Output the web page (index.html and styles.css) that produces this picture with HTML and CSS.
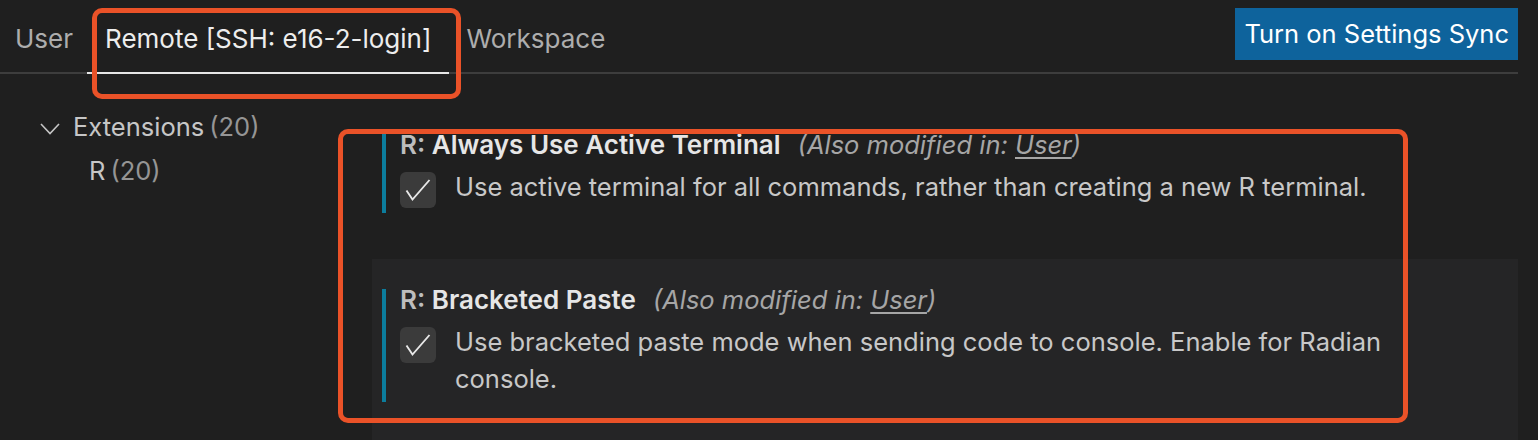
FILE: index.html
```html
<!DOCTYPE html>
<html lang="en">
<head>
<meta charset="utf-8">
<title>Settings</title>
<link rel="stylesheet" href="styles.css">
</head>
<body>
<div class="app">
  <header class="header">
    <nav class="tabs">
      <div class="tab tab-first">User</div>
      <div class="tab active">Remote [SSH: e16-2-login]</div>
      <div class="tab">Workspace</div>
    </nav>
    <button class="sync">Turn on Settings Sync</button>
  </header>
  <div class="content">
    <aside class="toc">
      <div class="toc-row">
        <svg class="chev" width="20" height="12" viewBox="0 0 20 12"><polyline points="1,1 10,10.5 19,1" fill="none" stroke="#c5c5c5" stroke-width="1.6"/></svg>
        <span class="toc-label">Extensions</span><span class="count">(20)</span>
      </div>
      <div class="toc-row sub"><span class="toc-label">R</span><span class="count">(20)</span></div>
    </aside>
    <main class="list">
      <section class="item">
        <div class="item-body">
          <div class="title"><span class="cat">R: </span><span class="label">Always Use Active Terminal</span><span class="also">(Also modified in: <span class="link">User</span>)</span></div>
          <div class="value">
            <span class="checkbox"><svg width="36" height="36" viewBox="0 0 36 36"><polyline points="6.5,18.5 12.5,27.5 29.5,8" fill="none" stroke="#e8e8e8" stroke-width="1.9"/></svg></span>
            <p class="desc">Use active terminal for all commands, rather than creating a new R terminal.</p>
          </div>
        </div>
      </section>
      <section class="item focused">
        <div class="item-body">
          <div class="title"><span class="cat">R: </span><span class="label">Bracketed Paste</span><span class="also">(Also modified in: <span class="link">User</span>)</span></div>
          <div class="value">
            <span class="checkbox"><svg width="36" height="36" viewBox="0 0 36 36"><polyline points="6.5,18.5 12.5,27.5 29.5,8" fill="none" stroke="#e8e8e8" stroke-width="1.9"/></svg></span>
            <p class="desc">Use bracketed paste mode when sending code to console. Enable for Radian console.</p>
          </div>
        </div>
      </section>
    </main>
  </div>
  <div class="annot annot-tab"></div>
  <div class="annot annot-items"></div>
</div>
</body>
</html>
```
FILE: styles.css
```css
html, body {
  margin: 0;
  padding: 0;
  background: #1f1f1f;
  height: 440px;
  overflow: hidden;
}

.app {
  position: relative;
  width: 1518px;
  height: 440px;
  font-family: Inter, "Noto Sans", sans-serif;
  font-size: 26px;
  color: #c8c8c8;
}

.header {
  display: flex;
  justify-content: space-between;
  align-items: flex-start;
  height: 74px;
  box-sizing: border-box;
  border-bottom: 2px solid #3d3d3d;
}

.tabs {
  display: flex;
}

.tab {
  height: 74px;
  box-sizing: border-box;
  margin-bottom: -2px;
  padding: 22.5px 16px 0 17px;
  line-height: 32px;
  color: #adadad;
  border-bottom: 2px solid transparent;
  white-space: nowrap;
}

.tab-first {
  padding-left: 15px;
  padding-right: 14px;
}

.tab.active {
  color: #ededed;
  border-bottom-color: #e6e6e6;
  padding-left: 18px;
  padding-right: 18px;
}

.sync {
  margin-top: 8px;
  height: 52px;
  padding: 0 9px;
  border: 0;
  background: #0e639c;
  color: #ffffff;
  font-family: inherit;
  font-size: 25.5px;
  line-height: 52px;
}

.content {
  display: flex;
}

.toc {
  width: 372px;
  flex: none;
  padding-top: 31px;
  font-size: 25.5px;
}

.toc-row {
  display: flex;
  align-items: center;
  height: 44px;
  line-height: 44px;
  padding-left: 40px;
}

.toc-row.sub {
  padding-left: 89px;
}

.chev {
  margin-right: 13px;
  margin-top: 4px;
}

.toc-label {
  color: #c6c6c6;
  margin-right: 5px;
}

.count {
  color: #959595;
}

.list {
  flex: 1;
  margin-top: 30px;
  height: 336px;
  overflow: hidden;
}

.item {
  padding: 30px 0 46px 10px;
}

.item.focused {
  background: #252526;
}

.item-body {
  border-left: 4px solid #0c7d9d;
  padding: 0 0 5px 14px;
}

.title {
  line-height: 22px;
  height: 22px;
  white-space: nowrap;
}

.cat {
  font-weight: 600;
  color: #bdbdbd;
}

.label {
  font-weight: 600;
  color: #e6e6e6;
}

.also {
  font-style: italic;
  font-size: 25.5px;
  color: #a6a6a6;
  margin-left: 17px;
}

.link {
  text-decoration: underline;
  text-underline-offset: 3px;
}

.value {
  display: flex;
  align-items: flex-start;
  margin-top: 12px;
}

.checkbox {
  flex: none;
  width: 36px;
  height: 36px;
  margin-top: 4px;
  border-radius: 6px;
  background: #3b3b3b;
  display: block;
}

.checkbox svg {
  display: block;
}

.desc {
  margin: 0 0 0 19px;
  width: 960px;
  font-size: 25.5px;
  line-height: 37px;
  color: #c8c8c8;
}

.annot {
  position: absolute;
  border: 5px solid #ea5228;
  border-radius: 10px;
  box-sizing: border-box;
  pointer-events: none;
}

.annot-tab {
  left: 92px;
  top: 8px;
  width: 369px;
  height: 91px;
}

.annot-items {
  left: 338px;
  top: 129px;
  width: 1070px;
  height: 294px;
}
```
